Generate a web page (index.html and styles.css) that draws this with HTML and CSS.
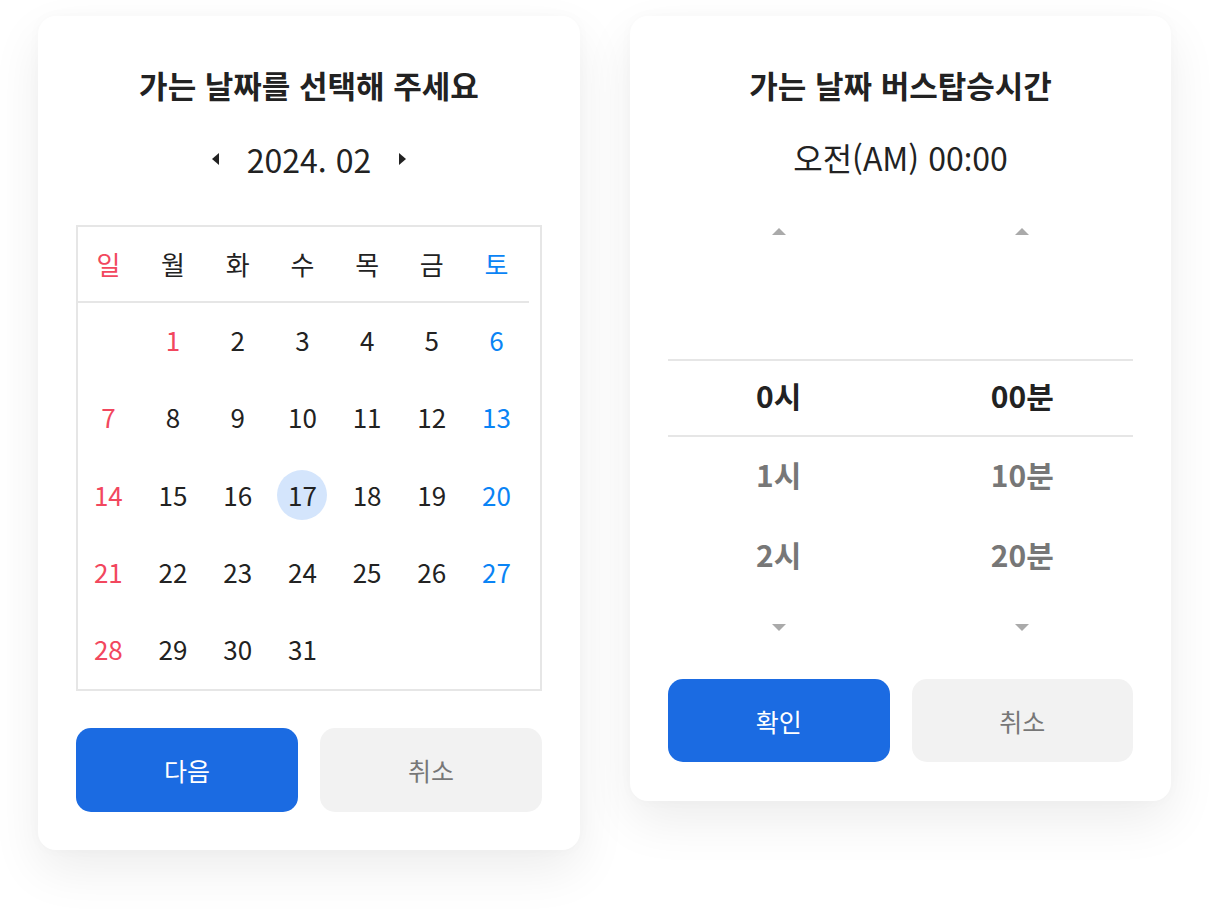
FILE: index.html
```html
<!DOCTYPE html>
<html lang="ko">
<head>
<meta charset="utf-8">
<title>날짜 및 시간 선택</title>
<link rel="stylesheet" href="styles.css">
</head>
<body>
<div class="page">
  <section class="card card-date">
    <h1 class="title">가는 날짜를 선택해 주세요</h1>
    <div class="month-nav">
      <button class="nav-btn" aria-label="이전 달">
        <svg width="7" height="12" viewBox="0 0 7 12"><path d="M7 0 L0 6 L7 12 Z" fill="#222"/></svg>
      </button>
      <span class="month">2024. 02</span>
      <button class="nav-btn" aria-label="다음 달">
        <svg width="7" height="12" viewBox="0 0 7 12"><path d="M0 0 L7 6 L0 12 Z" fill="#222"/></svg>
      </button>
    </div>
    <div class="calendar">
      <div class="weekdays">
        <div class="sun">일</div><div>월</div><div>화</div><div>수</div><div>목</div><div>금</div><div class="sat">토</div>
      </div>
      <div class="days">
        <div></div><div class="sun">1</div><div>2</div><div>3</div><div>4</div><div>5</div><div class="sat">6</div>
        <div class="sun">7</div><div>8</div><div>9</div><div>10</div><div>11</div><div>12</div><div class="sat">13</div>
        <div class="sun">14</div><div>15</div><div>16</div><div><span class="selected">17</span></div><div>18</div><div>19</div><div class="sat">20</div>
        <div class="sun">21</div><div>22</div><div>23</div><div>24</div><div>25</div><div>26</div><div class="sat">27</div>
        <div class="sun">28</div><div>29</div><div>30</div><div>31</div><div></div><div></div><div></div>
      </div>
    </div>
    <div class="actions">
      <button class="btn btn-primary">다음</button>
      <button class="btn btn-secondary">취소</button>
    </div>
  </section>

  <section class="card card-time">
    <h1 class="title">가는 날짜 버스탑승시간</h1>
    <div class="time-value">오전(AM) 00<span class="colon">:</span>00</div>
    <div class="picker">
      <div class="picker-row arrow-row arrow-up">
        <svg width="14" height="7" viewBox="0 0 14 7"><path d="M7 0 L14 7 L0 7 Z" fill="#aaa"/></svg>
        <svg width="14" height="7" viewBox="0 0 14 7"><path d="M7 0 L14 7 L0 7 Z" fill="#aaa"/></svg>
      </div>
      <div class="picker-row row-empty"><span></span><span></span></div>
      <div class="picker-row active"><span>0시</span><span>00분</span></div>
      <div class="picker-row"><span>1시</span><span>10분</span></div>
      <div class="picker-row"><span>2시</span><span>20분</span></div>
      <div class="picker-row arrow-row arrow-down">
        <svg width="14" height="7" viewBox="0 0 14 7"><path d="M0 0 L14 0 L7 7 Z" fill="#aaa"/></svg>
        <svg width="14" height="7" viewBox="0 0 14 7"><path d="M0 0 L14 0 L7 7 Z" fill="#aaa"/></svg>
      </div>
    </div>
    <div class="actions actions-time">
      <button class="btn btn-primary">확인</button>
      <button class="btn btn-secondary">취소</button>
    </div>
  </section>
</div>
</body>
</html>
```

FILE: styles.css
```css
* { box-sizing: border-box; }

html, body {
  margin: 0;
  padding: 0;
  background: #ffffff;
}

body {
  font-family: "Noto Sans CJK KR", "Noto Sans", sans-serif;
  color: #222222;
}

.page {
  display: flex;
  align-items: flex-start;
  gap: 50px;
  padding: 16px 0 64px 38px;
  min-height: 914px;
}

.card {
  background: #ffffff;
  border-radius: 18px;
  box-shadow: 0 20px 50px rgba(0, 0, 0, 0.075), 0 0 14px rgba(0, 0, 0, 0.025);
  padding: 49px 38px 38px;
}

.card-date { width: 542px; }
.card-time { width: 541px; padding-bottom: 39px; }

.title {
  margin: 0;
  font-size: 31px;
  font-weight: 700;
  line-height: 40px;
  text-align: center;
}

.month-nav {
  margin-top: 34px;
  height: 40px;
  display: flex;
  align-items: center;
  justify-content: center;
  gap: 28px;
}

.nav-btn {
  border: 0;
  background: none;
  padding: 0;
  width: 7px;
  height: 12px;
  display: flex;
}

.month {
  font-size: 32px;
  line-height: 40px;
  font-weight: 400;
}

.calendar {
  margin-top: 46px;
  border: 2px solid #e6e6e6;
  height: 466px;
}

.weekdays, .days {
  display: grid;
  grid-template-columns: repeat(7, 64.7px);
  width: 453px;
  margin-left: -2px;
}

.weekdays {
  height: 76px;
  border-bottom: 2px solid #e6e6e6;
}

.weekdays div {
  display: flex;
  align-items: center;
  justify-content: center;
  font-size: 26px;
  line-height: 1;
  padding-bottom: 1px;
}

.days {
  grid-auto-rows: 77.25px;
}

.days div {
  display: flex;
  align-items: center;
  justify-content: center;
  font-size: 26px;
  line-height: 1;
  padding-bottom: 3px;
}

.sun { color: #f2475e; }
.sat { color: #0a84f5; }

.days .selected {
  width: 50px;
  height: 50px;
  border-radius: 50%;
  background: #d4e5fc;
  display: flex;
  align-items: center;
  justify-content: center;
}

.actions {
  display: grid;
  grid-template-columns: 1fr 1fr;
  gap: 22px;
  margin-top: 37px;
}

.btn {
  height: 84px;
  border: 0;
  border-radius: 15px;
  font-family: inherit;
  font-size: 25px;
  font-weight: 400;
}

.btn-primary {
  background: #1b6be2;
  color: #ffffff;
}

.btn-secondary {
  background: #f2f2f2;
  color: #777777;
}

.time-value {
  margin-top: 32px;
  font-size: 32px;
  line-height: 40px;
  text-align: center;
}

.colon {
  font-family: "Noto Sans", sans-serif;
}

.picker-row {
  display: grid;
  grid-template-columns: 1fr 1fr;
  gap: 22px;
  height: 80px;
  align-items: center;
  justify-items: center;
  font-size: 30px;
  font-weight: 700;
  line-height: 1;
  padding-bottom: 6px;
  color: #777777;
}

.picker-row.row-empty {
  height: 82px;
}

.picker-row.active {
  height: 78px;
  border-top: 2px solid #e6e6e6;
  border-bottom: 2px solid #e6e6e6;
  color: #222222;
}

.arrow-row svg { display: block; }

.picker-row.arrow-up {
  height: 98px;
  padding-top: 6px;
  padding-bottom: 0;
}

.picker-row.arrow-down {
  height: 60px;
  padding-bottom: 0;
}

.actions-time {
  margin-top: 22px;
}

.actions-time .btn { height: 83px; }
```
